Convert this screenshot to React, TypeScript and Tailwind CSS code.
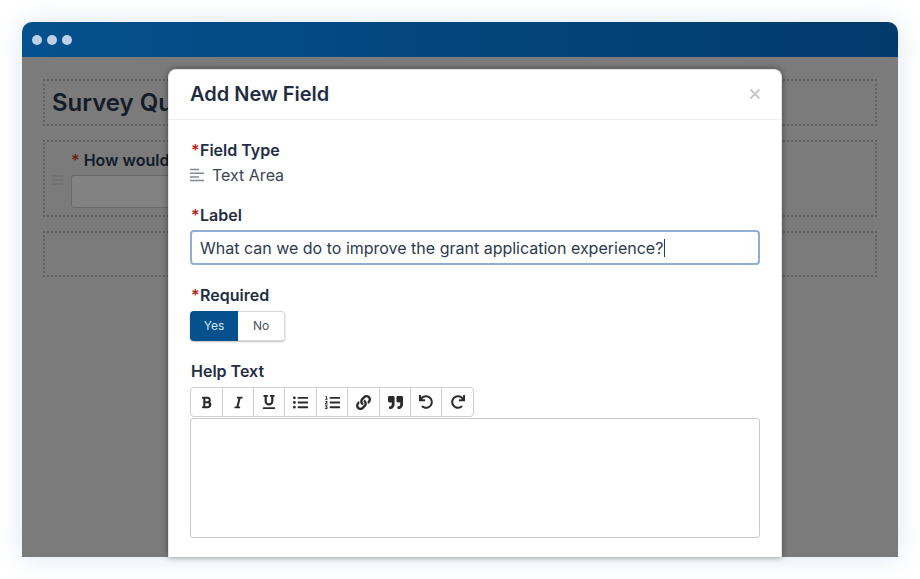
import React from "react";
import { FaBold, FaItalic, FaUnderline, FaListUl, FaListOl, FaLink, FaQuoteRight, FaUndo, FaRedo } from "react-icons/fa";

function Req({ children }: { children: React.ReactNode }) {
  return (
    <div className="flex text-[16px] leading-[20px] font-semibold text-[#1f2d43]">
      <span className="text-[#b3261e] w-[9px] ml-[1px]">*</span>
      <span>{children}</span>
    </div>
  );
}

const tools = [
  { I: FaBold, w: 32, s: 13 },
  { I: FaItalic, w: 31, s: 13 },
  { I: FaUnderline, w: 31, s: 14 },
  { I: FaListUl, w: 32, s: 15 },
  { I: FaListOl, w: 31, s: 15 },
  { I: FaLink, w: 32, s: 15 },
  { I: FaQuoteRight, w: 31, s: 15 },
  { I: FaUndo, w: 31, s: 14 },
  { I: FaRedo, w: 31, s: 14 },
];

export default function App() {
  return (
    <div className="w-[920px] h-[579px] bg-white p-[22px] overflow-hidden font-['Inter',sans-serif]">
      <div className="relative w-[876px] h-[535px] rounded-t-[12px] flex flex-col shadow-[0_0_24px_rgba(90,140,200,0.22)]">
        <div className="h-[35px] shrink-0 rounded-t-[10px] bg-gradient-to-r from-[#05518e] to-[#023a6b] flex items-center gap-[5px] pl-[10px]">
          <div className="w-[10px] h-[10px] rounded-full bg-[#bcd1e6]" />
          <div className="w-[10px] h-[10px] rounded-full bg-[#bcd1e6]" />
          <div className="w-[10px] h-[10px] rounded-full bg-[#bcd1e6]" />
        </div>
        <div className="flex-1 bg-[#7a7b7a] px-[21px] pt-[22px] flex flex-col gap-[14px] overflow-hidden">
          <div className="h-[47px] shrink-0 border-2 border-dotted border-[#5f605f] pl-[7px] flex items-center text-[24px] font-semibold text-[#141c29] whitespace-nowrap">
            Survey Questions
          </div>
          <div className="h-[77px] shrink-0 border-2 border-dotted border-[#5f605f] flex">
            <div className="w-[18px] flex items-center justify-end pt-[3px]">
              <svg width="11" height="10" viewBox="0 0 11 10" className="text-[#6a6b6a]">
                <path d="M0 1h11M0 5h11M0 9h11" stroke="currentColor" strokeWidth="1" />
              </svg>
            </div>
            <div className="pl-[8px] pt-[8px]">
              <div className="text-[16px] leading-[20px] font-semibold text-[#141c29] whitespace-nowrap">
                <span className="text-[#6e1a14]">* </span>How would you rate
              </div>
              <div className="mt-[5px] w-[400px] h-[33px] rounded-[3px] bg-[#818281] border border-[#696a69]" />
            </div>
          </div>
          <div className="h-[46px] shrink-0 border-2 border-dotted border-[#5f605f]" />
        </div>

        <div className="absolute left-[146px] top-[47px] w-[614px] h-[488px] bg-white rounded-t-[8px] shadow-[0_0_6px_rgba(0,0,0,0.45)] border-t border-x border-[#e6e6e6]">
          <div className="h-[50px] border-b border-[#eeeeee] flex items-center justify-between pl-[21px] pr-[20px] pb-[1px]">
            <div className="text-[20px] font-semibold text-[#1f2d43]">Add New Field</div>
            <svg width="12" height="12" viewBox="0 0 12 12" className="text-[#c9c9c9]">
              <path d="M1.5 1.5l9 9M10.5 1.5l-9 9" stroke="currentColor" strokeWidth="2" />
            </svg>
          </div>
          <div className="px-[21px] pt-[20px]">
            <Req>Field Type</Req>
            <div className="mt-[5px] flex items-center gap-[8px] text-[16px] leading-[20px] text-[#3a4658]">
              <svg width="14" height="14" viewBox="0 0 14 14" className="text-[#7f8b99]">
                <path d="M0 1.5h9M0 5.2h14M0 8.9h9M0 12.6h14" stroke="currentColor" strokeWidth="1.5" />
              </svg>
              Text Area
            </div>
            <div className="mt-[20px]"><Req>Label</Req></div>
            <div className="mt-[5px] h-[35px] w-[570px] rounded-[4px] border-2 border-[#8fb0d3] flex items-center pl-[8px] text-[16px] text-[#2c3a4e] whitespace-nowrap">
              What can we do to improve the grant application experience?<span className="inline-block w-[1px] h-[18px] bg-[#2c3a4e] ml-[1px]" />
            </div>
            <div className="mt-[20px]"><Req>Required</Req></div>
            <div className="mt-[6px] flex w-[95px] h-[30px] rounded-[4px] text-[12px] shadow-[0_1px_2px_rgba(0,0,0,0.25)]">
              <div className="w-[48px] bg-[#05518e] text-[#dbe6f0] rounded-l-[4px] flex items-center justify-center">Yes</div>
              <div className="flex-1 bg-white text-[#4a5260] border border-l-0 border-[#d8d8d8] rounded-r-[4px] flex items-center justify-center">No</div>
            </div>
            <div className="mt-[20px] ml-[1px] text-[16px] leading-[20px] font-semibold text-[#1f2d43]">Help Text</div>
            <div className="mt-[6px] inline-flex h-[30px] border border-[#cfcfcf] rounded-[4px] text-[#2a2a2a] align-top">
              {tools.map(({ I, w, s }, i) => (
                <div key={i} style={{ width: w }} className="flex items-center justify-center border-r border-[#cfcfcf] last:border-r-0">
                  <I size={s} />
                </div>
              ))}
            </div>
            <div className="mt-[1px] w-[570px] h-[120px] border border-[#c9c9c9] rounded-[3px]" />
          </div>
        </div>
      </div>
    </div>
  );
}
